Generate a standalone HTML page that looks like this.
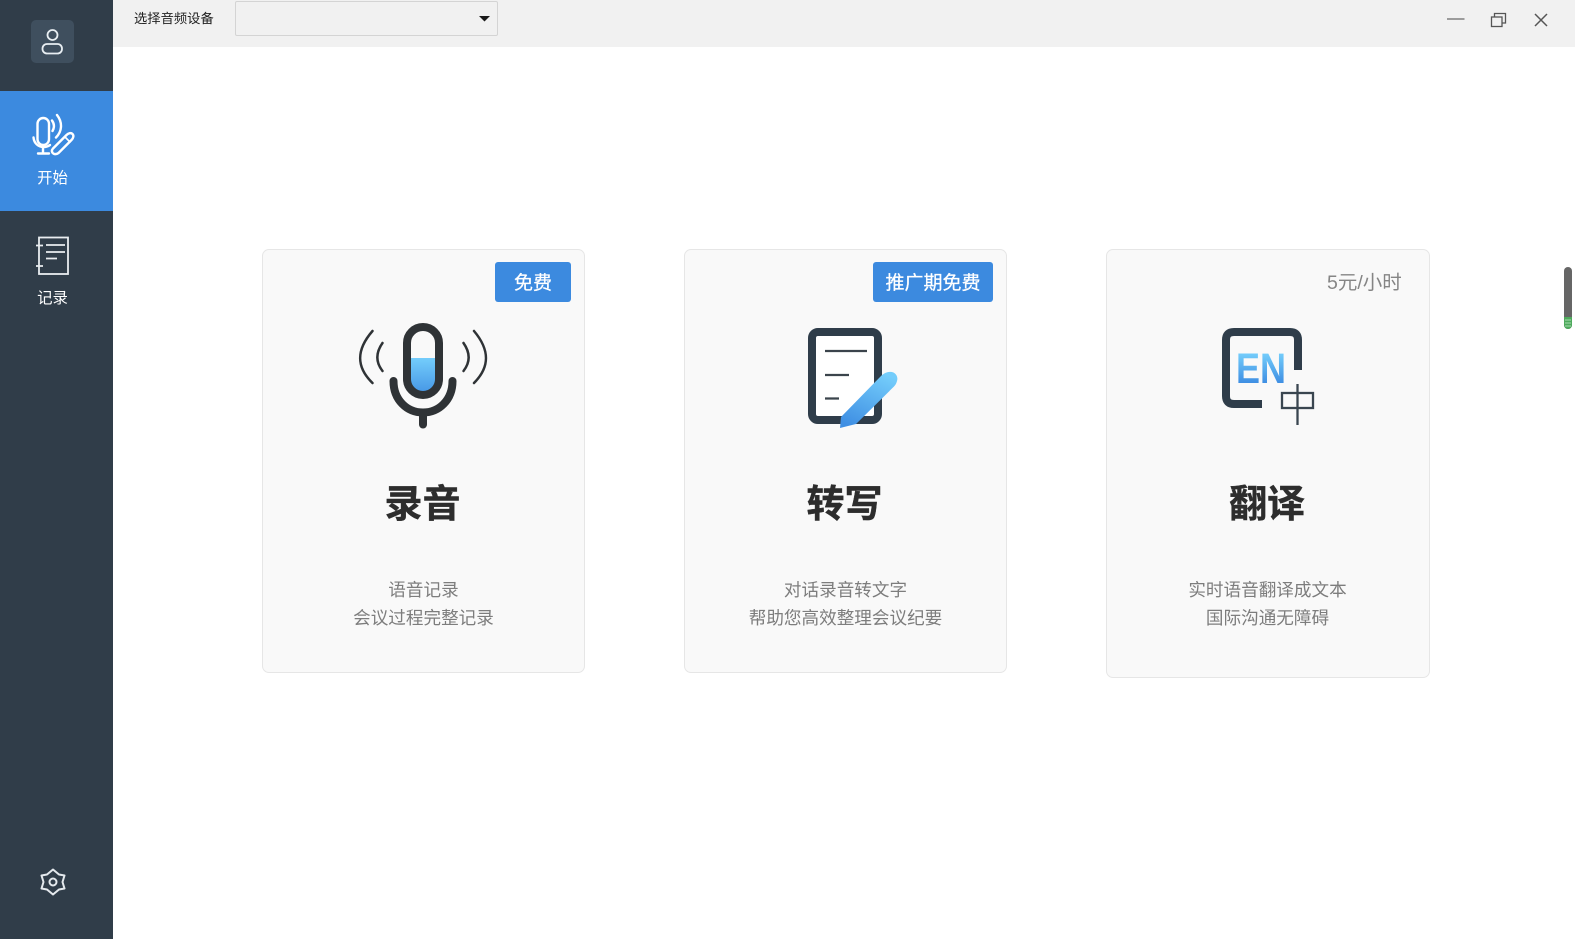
<!DOCTYPE html>
<html lang="zh"><head><meta charset="utf-8">
<style>
html,body{margin:0;padding:0;width:1575px;height:939px;overflow:hidden;background:#fff;font-family:"Liberation Sans","Noto Sans CJK SC",sans-serif}
.a{position:absolute}
#side{left:0;top:0;width:113px;height:939px;background:#303d49}
#active{left:0;top:91px;width:113px;height:120px;background:#3c8adf}
#avatar{left:31px;top:20px;width:43px;height:43px;border-radius:5px;background:#3f4f5e}
#top{left:113px;top:0;width:1462px;height:47px;background:#f1f1f1}
#sel{left:235px;top:1px;width:261px;height:33px;border:1px solid #d4d4d4;border-radius:2px;background:#f1f1f1}
.nav{left:0;width:105px;text-align:center;color:#fff;font-size:15.4px;line-height:20px}
#lab{left:134px;top:9px;font-size:13.3px;line-height:20px;color:#222;white-space:nowrap}
.card{box-sizing:border-box;top:249px;width:323px;background:#f9f9f9;border:1px solid #e6e6e6;border-radius:7px}
.badge{top:262px;height:40px;line-height:43px;background:#3c8adf;color:#fff;font-size:19px;text-align:center;border-radius:3px;white-space:nowrap;-webkit-text-stroke:.25px #fff}
.title{width:323px;top:480px;text-align:center;font-size:38px;line-height:50px;font-weight:700;color:#2d2d2d;-webkit-text-stroke:.4px #2d2d2d}
.desc{width:323px;top:577px;text-align:center;font-size:17.6px;line-height:27.5px;color:#7d7d7d;white-space:nowrap}
svg{position:absolute;left:0;top:0}
</style></head><body>
<div class="a" id="side"></div>
<div class="a" id="active"></div>
<div class="a" id="avatar"></div>
<div class="a" id="top"></div>
<div class="a" id="sel"></div>
<div class="a" id="lab">选择音频设备</div>
<div class="a nav" style="top:169px">开始</div>
<div class="a nav" style="top:289px">记录</div>

<div class="a card" style="left:262px;height:424px;width:323px"></div>
<div class="a card" style="left:684px;height:424px"></div>
<div class="a card" style="left:1106px;height:429px;width:324px"></div>

<div class="a badge" style="left:495px;width:76px">免费</div>
<div class="a badge" style="left:873px;width:120px">推广期免费</div>
<div class="a" style="left:1327px;top:272px;font-size:19.5px;line-height:22px;color:#858585;white-space:nowrap">5元/小时</div>

<div class="a title" style="left:261px">录音</div>
<div class="a title" style="left:683px">转写</div>
<div class="a title" style="left:1105.500px">翻译</div>

<div class="a desc" style="left:262px">语音记录<br>会议过程完整记录</div>
<div class="a desc" style="left:684px">对话录音转文字<br>帮助您高效整理会议纪要</div>
<div class="a desc" style="left:1106px">实时语音翻译成文本<br>国际沟通无障碍</div>

<svg width="1575" height="939" viewBox="0 0 1575 939" fill="none">
<defs>
<linearGradient id="g1" x1="0" y1="0" x2="0" y2="1"><stop offset="0" stop-color="#74cdfb"/><stop offset="1" stop-color="#3f8fe3"/></linearGradient>
<linearGradient id="g2" gradientUnits="userSpaceOnUse" x1="880" y1="372" x2="855" y2="428"><stop offset="0" stop-color="#74cdfb"/><stop offset="1" stop-color="#3f8fe3"/></linearGradient>
<linearGradient id="g3" gradientUnits="userSpaceOnUse" x1="0" y1="353" x2="0" y2="383"><stop offset="0" stop-color="#74cdfb"/><stop offset="1" stop-color="#3f8fe3"/></linearGradient>
</defs>
<!-- avatar -->
<g stroke="#e8eef2" stroke-width="1.800">
<circle cx="52.500" cy="35" r="5"/>
<rect x="42.500" y="44" width="19.500" height="9.500" rx="4.500"/>
</g>
<!-- start nav icon -->
<g stroke="#fff" stroke-width="2.400" stroke-linecap="round" stroke-linejoin="round">
<rect x="37.500" y="118" width="11.500" height="27" rx="5.750"/>
<path d="M33.500 137.500 C34 143 38 147 43.500 147 C46 147 48 146.500 50 145"/>
<path d="M43 147V153M38 153.500H49"/>
<path d="M52 120.500C54.500 124 54.500 127.500 52.500 131"/>
<path d="M57 115C62.500 122 62.500 131 56 137.500"/>
<path d="M53 148.500 L66.500 135 C68.500 133 71 132.500 72.500 134 C74 135.500 73.500 138 71.500 140 L58.500 153 C56.500 154.500 54 154.500 52.700 153 C51.500 151.500 51.700 150 53 148.500Z"/>
<path d="M65 137L70 142" stroke-width="1.600"/>
</g>
<!-- record nav icon -->
<g stroke="#e9edf0" stroke-width="1.800">
<rect x="39" y="237.500" width="29" height="36.500"/>
<path d="M36 245.500H43M36 266H43M46 245H65M46 252H65M46 258.500H57"/>
</g>
<!-- gear -->
<g stroke="#e4e9ed" stroke-width="2" stroke-linejoin="round">
<path d="M53 869.500L59 874.500L64.500 875.500L62.500 882L64.500 888.500L59 889.500L53 894.500L47 889.500L41.500 888.500L43.500 882L41.500 875.500L47 874.500Z"/>
<circle cx="53" cy="882" r="3.500"/>
</g>
<!-- dropdown arrow -->
<path d="M479 16H490L484.500 21.500Z" fill="#1a1a1a"/>
<!-- window controls -->
<path d="M1447 19H1464.500" stroke="#6a6a6a" stroke-width="1.300"/>
<g stroke="#555" stroke-width="1.300"><rect x="1491.500" y="17" width="10.500" height="9.500"/><path d="M1494.500 17V13.500H1505.500V23H1502"/></g>
<path d="M1535 14L1547 26M1547 14L1535 26" stroke="#555" stroke-width="1.500"/>
<!-- scrollbar -->
<rect x="1564" y="267" width="8" height="62" rx="4" fill="#666"/>
<path d="M1564 317H1572V325A4 4 0 0 1 1564 325Z" fill="#4eaa5c"/>
<path d="M1565 320H1571M1565 323H1571M1565 326H1571" stroke="#a5dbae" stroke-width="1"/>

<!-- mic icon -->
<path d="M409 358H437V384A14 14 0 0 1 409 384Z" fill="url(#g1)"/>
<rect x="407" y="327" width="32" height="68" rx="16" stroke="#2f3336" stroke-width="8"/>
<path d="M393.500 381C393.500 400 407 412.500 423 412.500C439 412.500 452.500 400 452.500 381" stroke="#2f3336" stroke-width="8" stroke-linecap="round"/>
<path d="M423 413V424.500" stroke="#2f3336" stroke-width="8" stroke-linecap="round"/>
<g stroke="#2f3336" stroke-width="2.500" stroke-linecap="round">
<path d="M382.500 343C375.500 353 375.500 362 382.500 371"/>
<path d="M372.500 331C356 350 356 367 372.500 383"/>
<path d="M463.500 343C470.500 353 470.500 362 463.500 371"/>
<path d="M474 331C490 350 490 367 474 383"/>
</g>

<!-- doc icon -->
<rect x="812" y="332" width="66" height="88" rx="6" fill="#fff" stroke="#2f3d4a" stroke-width="8"/>
<g stroke="#3b444c" stroke-width="2.300">
<path d="M825 351H867M825 375H849M825 398.500H839"/>
</g>
<path d="M840 428L841 417L881 376C885 372 890 371 893.500 372.500C897 374.500 898 378 897 381C896.500 383 895.500 385 894 386.500L856 424Z" fill="url(#g2)"/>

<!-- EN icon -->
<path d="M1298 370V340Q1298 332 1290 332H1234Q1226 332 1226 340V396Q1226 404 1234 404H1262" stroke="#2f3d4a" stroke-width="8"/>
<text x="1236" y="383" font-family="'Liberation Sans',sans-serif" font-weight="700" font-size="43" textLength="50" lengthAdjust="spacingAndGlyphs" fill="url(#g3)">EN</text>
<g stroke="#3a4650" stroke-width="2.300">
<rect x="1282" y="393" width="31" height="15"/>
<path d="M1297.500 384V425"/>
</g>
</svg>
</body></html>
